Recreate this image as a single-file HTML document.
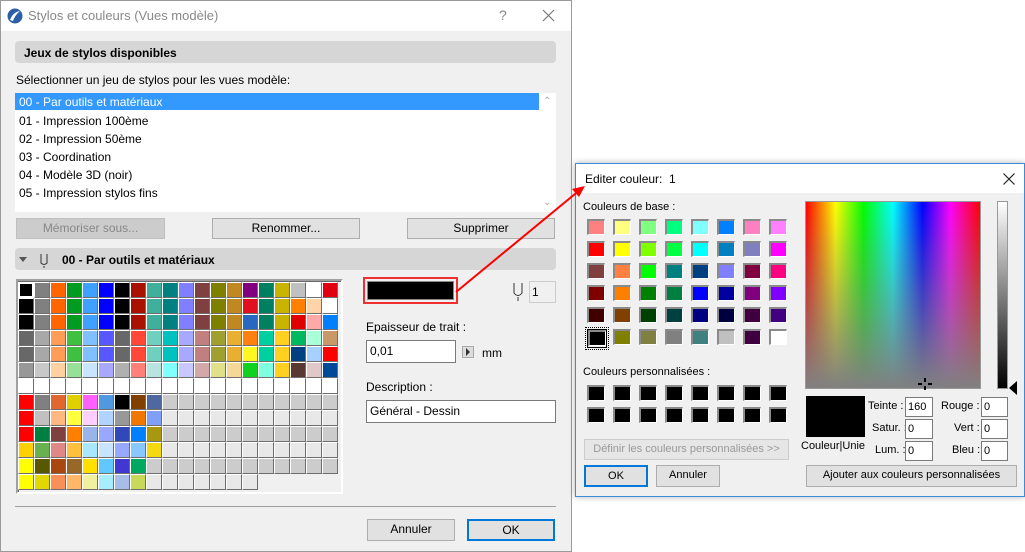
<!DOCTYPE html>
<html><head><meta charset="utf-8"><style>
*{box-sizing:border-box;margin:0;padding:0}
body{width:1025px;height:552px;background:#fff;position:relative;overflow:hidden;font-family:"Liberation Sans",sans-serif;font-size:12px;color:#000}
.a{position:absolute}
.btn{position:absolute;background:#e1e1e1;border:1px solid #adadad;text-align:center;font-size:12px;line-height:19px}
.inp{position:absolute;background:#fff;border:1px solid #7a7a7a;padding-left:3px;font-size:12px}
.hdr{position:absolute;background:#d6d6d6;border-radius:4px;font-weight:bold;font-size:12px}
#grid{position:absolute;left:18px;top:282px;width:320px;display:flex;flex-wrap:wrap}
#grid i{display:block;width:16px;height:16px;border-right:1px solid #6e6e6e;border-bottom:1px solid #6e6e6e;border-left:1px solid #fff;border-top:1px solid #fff}
.sw{position:absolute;width:18px;height:16px;border-top:2px solid #8a8a8a;border-left:2px solid #8a8a8a;border-right:1px solid #fff;border-bottom:1px solid #fff}
.sm{font-size:11px}
</style></head><body>
<div class="a" style="left:0;top:0;width:572px;height:552px;background:#f0f0f0;border:1px solid #9a9a9a"></div>
<div class="a" style="left:1px;top:1px;width:570px;height:30px;background:#fff"></div>
<svg class="a" style="left:7px;top:8px" width="16" height="16"><circle cx="8" cy="8" r="7.5" fill="#2c5fa8"/><path d="M3 12 Q6 4 13 3 Q8 7 6 13Z" fill="#fff"/></svg>
<div class="a" style="left:28px;top:8px;font-size:13px;color:#888">Stylos et couleurs (Vues modèle)</div>
<div class="a" style="left:499px;top:7px;font-size:14px;color:#888">?</div>
<svg class="a" style="left:542px;top:9px" width="13" height="13"><path d="M1 1L12 12M12 1L1 12" stroke="#777" stroke-width="1.2"/></svg>

<div class="hdr" style="left:15px;top:41px;width:541px;height:22px;padding:5px 0 0 9px">Jeux de stylos disponibles</div>
<div class="a" style="left:16px;top:73px">Sélectionner un jeu de stylos pour les vues modèle:</div>
<div class="a" style="left:15px;top:93px;width:541px;height:119px;background:#fff"></div>
<div class="a" style="left:15px;top:93px;width:524px;height:17px;background:#3399ff;color:#fff;padding:2px 0 0 4px">00 - Par outils et matériaux</div>
<div class="a" style="left:19px;top:112px;line-height:18px">01 - Impression 100ème<br>02 - Impression 50ème<br>03 - Coordination<br>04 - Modèle 3D (noir)<br>05 - Impression stylos fins</div>
<div class="a" style="left:543px;top:96px;color:#aaa;font-size:10px">&#8963;</div>
<div class="a" style="left:543px;top:197px;color:#aaa;font-size:10px">&#8964;</div>
<div class="btn" style="left:16px;top:218px;width:149px;height:21px;background:#ccc;border-color:#bfbfbf;color:#888">Mémoriser sous...</div>
<div class="btn" style="left:212px;top:218px;width:148px;height:21px">Renommer...</div>
<div class="btn" style="left:407px;top:218px;width:148px;height:21px">Supprimer</div>
<div class="hdr" style="left:15px;top:248px;width:541px;height:22px;padding:5px 0 0 47px">00 - Par outils et matériaux</div>
<svg class="a" style="left:19px;top:254px" width="40" height="14"><path d="M0 3L8 3L4 8Z" fill="#555"/><path d="M22 0V9Q25 12 28 9V0M25 12V14" stroke="#333" fill="none" stroke-width="1"/></svg>

<div class="a" style="left:16px;top:279px;width:327px;height:215px;background:#f0f0f0;border:2px solid;border-color:#a0a0a0 #fff #fff #a0a0a0;box-shadow:inset 1px 1px #696969"></div>
<div id="grid">
<i style="background:#000;border:2px solid #fff"></i><i style="background:#808080"></i><i style="background:#f60"></i><i style="background:#009c22"></i><i style="background:#40a0ff"></i><i style="background:#00f"></i><i style="background:#000"></i><i style="background:#a81000"></i><i style="background:#40b09c"></i><i style="background:#008080"></i><i style="background:#8080ff"></i><i style="background:#804040"></i><i style="background:#808000"></i><i style="background:#c08820"></i><i style="background:#800080"></i><i style="background:#008060"></i><i style="background:#c8b400"></i><i style="background:#c0c0c0"></i><i style="background:#fff"></i><i style="background:#e00010"></i>
<i style="background:#000"></i><i style="background:#808080"></i><i style="background:#f60"></i><i style="background:#009c22"></i><i style="background:#40a0ff"></i><i style="background:#00f"></i><i style="background:#000"></i><i style="background:#a81000"></i><i style="background:#40b09c"></i><i style="background:#008080"></i><i style="background:#8080ff"></i><i style="background:#804040"></i><i style="background:#808000"></i><i style="background:#c08820"></i><i style="background:#e01020"></i><i style="background:#008060"></i><i style="background:#c8b400"></i><i style="background:#ff8000"></i><i style="background:#ffd4a8"></i><i style="background:#fff"></i>
<i style="background:#000"></i><i style="background:#808080"></i><i style="background:#f60"></i><i style="background:#009c22"></i><i style="background:#40a0ff"></i><i style="background:#00f"></i><i style="background:#000"></i><i style="background:#a81000"></i><i style="background:#40b09c"></i><i style="background:#008080"></i><i style="background:#8080ff"></i><i style="background:#804040"></i><i style="background:#808000"></i><i style="background:#c08820"></i><i style="background:#2868c0"></i><i style="background:#008060"></i><i style="background:#c8b400"></i><i style="background:#e00000"></i><i style="background:#ffa8a8"></i><i style="background:#0080ff"></i>
<i style="background:#686868"></i><i style="background:#a8a8a8"></i><i style="background:#ff9c58"></i><i style="background:#40c040"></i><i style="background:#80c0ff"></i><i style="background:#5858ff"></i><i style="background:#686868"></i><i style="background:#ff4838"></i><i style="background:#70d0c0"></i><i style="background:#00c0c0"></i><i style="background:#a8a8ff"></i><i style="background:#c08080"></i><i style="background:#a0a030"></i><i style="background:#e8b030"></i><i style="background:#ff8010"></i><i style="background:#00d0a0"></i><i style="background:#ffd020"></i><i style="background:#00b860"></i><i style="background:#a8ffd8"></i><i style="background:#c89868"></i>
<i style="background:#686868"></i><i style="background:#a8a8a8"></i><i style="background:#ff9c58"></i><i style="background:#40c040"></i><i style="background:#80c0ff"></i><i style="background:#5858ff"></i><i style="background:#686868"></i><i style="background:#ff4838"></i><i style="background:#70d0c0"></i><i style="background:#00c0c0"></i><i style="background:#a8a8ff"></i><i style="background:#c08080"></i><i style="background:#a0a030"></i><i style="background:#e8b030"></i><i style="background:#fff820"></i><i style="background:#00d0a0"></i><i style="background:#ffd020"></i><i style="background:#004080"></i><i style="background:#a8d0ff"></i><i style="background:#f00"></i>
<i style="background:#989898"></i><i style="background:#c8c8c8"></i><i style="background:#ffd0a0"></i><i style="background:#98e098"></i><i style="background:#c8e4ff"></i><i style="background:#a8a8ff"></i><i style="background:#b0b0b0"></i><i style="background:#ff8078"></i><i style="background:#b8e4e0"></i><i style="background:#80ffff"></i><i style="background:#c8c8ff"></i><i style="background:#d4a8a8"></i><i style="background:#e0e088"></i><i style="background:#f4d898"></i><i style="background:#10d020"></i><i style="background:#80ffe0"></i><i style="background:#ffd020"></i><i style="background:#583830"></i><i style="background:#e0c8c8"></i><i style="background:#004898"></i>
<i style="background:#fff"></i><i style="background:#fff"></i><i style="background:#fff"></i><i style="background:#fff"></i><i style="background:#fff"></i><i style="background:#fff"></i><i style="background:#fff"></i><i style="background:#fff"></i><i style="background:#fff"></i><i style="background:#fff"></i><i style="background:#fff"></i><i style="background:#fff"></i><i style="background:#fff"></i><i style="background:#fff"></i><i style="background:#fff"></i><i style="background:#fff"></i><i style="background:#fff"></i><i style="background:#fff"></i><i style="background:#fff"></i><i style="background:#fff"></i>
<i style="background:#f00"></i><i style="background:#808080"></i><i style="background:#e06830"></i><i style="background:#e0d000"></i><i style="background:#ff60ff"></i><i style="background:#5098e0"></i><i style="background:#000"></i><i style="background:#804000"></i><i style="background:#5068a0"></i><i style="background:#ccc"></i><i style="background:#ccc"></i><i style="background:#ccc"></i><i style="background:#ccc"></i><i style="background:#ccc"></i><i style="background:#ccc"></i><i style="background:#ccc"></i><i style="background:#ccc"></i><i style="background:#ccc"></i><i style="background:#ccc"></i><i style="background:#ccc"></i>
<i style="background:#f00"></i><i style="background:#c0c0c0"></i><i style="background:#ffb880"></i><i style="background:#ffff40"></i><i style="background:#ffd0ff"></i><i style="background:#b0d4ff"></i><i style="background:#989898"></i><i style="background:#f07800"></i><i style="background:#80a0f8"></i><i style="background:#e8e8e8"></i><i style="background:#e8e8e8"></i><i style="background:#e8e8e8"></i><i style="background:#e8e8e8"></i><i style="background:#e8e8e8"></i><i style="background:#e8e8e8"></i><i style="background:#e8e8e8"></i><i style="background:#e8e8e8"></i><i style="background:#e8e8e8"></i><i style="background:#e8e8e8"></i><i style="background:#e8e8e8"></i>
<i style="background:#f00"></i><i style="background:#008040"></i><i style="background:#804040"></i><i style="background:#ff8000"></i><i style="background:#98b4e8"></i><i style="background:#98a8ff"></i><i style="background:#3048b8"></i><i style="background:#0080ff"></i><i style="background:#a89810"></i><i style="background:#ccc"></i><i style="background:#ccc"></i><i style="background:#ccc"></i><i style="background:#ccc"></i><i style="background:#ccc"></i><i style="background:#ccc"></i><i style="background:#ccc"></i><i style="background:#ccc"></i><i style="background:#ccc"></i><i style="background:#ccc"></i><i style="background:#ccc"></i>
<i style="background:#ffd000"></i><i style="background:#68b050"></i><i style="background:#e08888"></i><i style="background:#ffc040"></i><i style="background:#a8e8ff"></i><i style="background:#c8e4ff"></i><i style="background:#98a8ff"></i><i style="background:#88c8ff"></i><i style="background:#f4d810"></i><i style="background:#e8e8e8"></i><i style="background:#e8e8e8"></i><i style="background:#e8e8e8"></i><i style="background:#e8e8e8"></i><i style="background:#e8e8e8"></i><i style="background:#e8e8e8"></i><i style="background:#e8e8e8"></i><i style="background:#e8e8e8"></i><i style="background:#e8e8e8"></i><i style="background:#e8e8e8"></i><i style="background:#e8e8e8"></i>
<i style="background:#ff0"></i><i style="background:#585800"></i><i style="background:#a84810"></i><i style="background:#986828"></i><i style="background:#ffe000"></i><i style="background:#60c8ff"></i><i style="background:#4038d0"></i><i style="background:#00a860"></i><i style="background:#ccc"></i><i style="background:#ccc"></i><i style="background:#ccc"></i><i style="background:#ccc"></i><i style="background:#ccc"></i><i style="background:#ccc"></i><i style="background:#ccc"></i><i style="background:#ccc"></i><i style="background:#ccc"></i><i style="background:#ccc"></i><i style="background:#ccc"></i><i style="background:#ccc"></i>
<i style="background:#ff0"></i><i style="background:#e0d800"></i><i style="background:#f89058"></i><i style="background:#ffb868"></i><i style="background:#f0f0a0"></i><i style="background:#a8ecff"></i><i style="background:#a8bce8"></i><i style="background:#c8d858"></i><i style="background:#e8e8e8"></i><i style="background:#e8e8e8"></i><i style="background:#e8e8e8"></i><i style="background:#e8e8e8"></i><i style="background:#e8e8e8"></i><i style="background:#e8e8e8"></i><i style="background:#e8e8e8"></i>
</div>

<div class="a" style="left:363px;top:277px;width:95px;height:27px;border:2px solid #f03030;padding:2px"><div style="width:100%;height:100%;background:#000;border:1px solid #888"></div></div>
<svg class="a" style="left:512px;top:283px" width="12" height="18"><path d="M2 0V10Q6 15 10 10V0M6 14V18" stroke="#333" fill="none" stroke-width="1"/></svg>
<div class="inp" style="left:529px;top:281px;width:27px;height:22px;background:#f0f0f0;border-color:#ccc;line-height:20px;padding-left:2px">1</div>
<div class="a" style="left:366px;top:320px">Epaisseur de trait :</div>
<div class="inp" style="left:366px;top:340px;width:90px;height:23px;line-height:21px">0,01</div>
<div class="a" style="left:462px;top:346px;width:12px;height:12px;background:#ddd;border:1px solid #aaa"></div>
<svg class="a" style="left:465px;top:348px" width="6" height="8"><path d="M1 0L5 4L1 8Z" fill="#333"/></svg>
<div class="a" style="left:482px;top:346px">mm</div>
<div class="a" style="left:366px;top:380px">Description :</div>
<div class="inp" style="left:366px;top:400px;width:190px;height:23px;line-height:21px">Général - Dessin</div>
<div class="a" style="left:15px;top:506px;width:541px;height:1px;background:#a0a0a0"></div>
<div class="btn" style="left:367px;top:519px;width:88px;height:22px">Annuler</div>
<div class="btn" style="left:467px;top:519px;width:88px;height:22px;border:2px solid #0078d7;line-height:18px">OK</div>

<div class="a" style="left:575px;top:163px;width:450px;height:334px;background:#f0f0f0;border:1px solid #3c8ad8;box-shadow:0 0 6px rgba(0,0,0,.3)"></div>
<div class="a" style="left:576px;top:164px;width:448px;height:29px;background:#fff"></div>
<div class="a" style="left:585px;top:172px;font-size:12px">Editer couleur:&nbsp; 1</div>
<svg class="a" style="left:1003px;top:173px" width="12" height="12"><path d="M0.5 0.5L11.5 11.5M11.5 0.5L0.5 11.5" stroke="#222" stroke-width="1.2"/></svg>
<div class="a sm" style="left:583px;top:201px">Couleurs de base :</div>
<div class="sw" style="left:587px;top:219px;background:#ff8080"></div><div class="sw" style="left:613px;top:219px;background:#ffff80"></div><div class="sw" style="left:639px;top:219px;background:#80ff80"></div><div class="sw" style="left:665px;top:219px;background:#00ff80"></div><div class="sw" style="left:691px;top:219px;background:#80ffff"></div><div class="sw" style="left:717px;top:219px;background:#0080ff"></div><div class="sw" style="left:743px;top:219px;background:#ff80c0"></div><div class="sw" style="left:769px;top:219px;background:#ff80ff"></div>
<div class="sw" style="left:587px;top:241px;background:#f00"></div><div class="sw" style="left:613px;top:241px;background:#ff0"></div><div class="sw" style="left:639px;top:241px;background:#80ff00"></div><div class="sw" style="left:665px;top:241px;background:#00ff40"></div><div class="sw" style="left:691px;top:241px;background:#0ff"></div><div class="sw" style="left:717px;top:241px;background:#0080c0"></div><div class="sw" style="left:743px;top:241px;background:#8080c0"></div><div class="sw" style="left:769px;top:241px;background:#f0f"></div>
<div class="sw" style="left:587px;top:263px;background:#804040"></div><div class="sw" style="left:613px;top:263px;background:#ff8040"></div><div class="sw" style="left:639px;top:263px;background:#0f0"></div><div class="sw" style="left:665px;top:263px;background:#008080"></div><div class="sw" style="left:691px;top:263px;background:#004080"></div><div class="sw" style="left:717px;top:263px;background:#8080ff"></div><div class="sw" style="left:743px;top:263px;background:#800040"></div><div class="sw" style="left:769px;top:263px;background:#ff0080"></div>
<div class="sw" style="left:587px;top:285px;background:#800000"></div><div class="sw" style="left:613px;top:285px;background:#ff8000"></div><div class="sw" style="left:639px;top:285px;background:#008000"></div><div class="sw" style="left:665px;top:285px;background:#008040"></div><div class="sw" style="left:691px;top:285px;background:#00f"></div><div class="sw" style="left:717px;top:285px;background:#0000a0"></div><div class="sw" style="left:743px;top:285px;background:#800080"></div><div class="sw" style="left:769px;top:285px;background:#8000ff"></div>
<div class="sw" style="left:587px;top:307px;background:#400000"></div><div class="sw" style="left:613px;top:307px;background:#804000"></div><div class="sw" style="left:639px;top:307px;background:#004000"></div><div class="sw" style="left:665px;top:307px;background:#004040"></div><div class="sw" style="left:691px;top:307px;background:#000080"></div><div class="sw" style="left:717px;top:307px;background:#000040"></div><div class="sw" style="left:743px;top:307px;background:#400040"></div><div class="sw" style="left:769px;top:307px;background:#400080"></div>
<div class="a" style="left:585px;top:327px;width:24px;height:23px;border:1px dotted #000;padding:1px"><div style="width:100%;height:100%;border:1px solid #000"></div></div>
<div class="sw" style="left:588px;top:330px;background:#000"></div><div class="sw" style="left:613px;top:329px;background:#808000"></div><div class="sw" style="left:639px;top:329px;background:#808040"></div><div class="sw" style="left:665px;top:329px;background:#808080"></div><div class="sw" style="left:691px;top:329px;background:#408080"></div><div class="sw" style="left:717px;top:329px;background:#c0c0c0"></div><div class="sw" style="left:743px;top:329px;background:#400040"></div><div class="sw" style="left:769px;top:329px;background:#fff"></div>
<div class="a sm" style="left:583px;top:366px">Couleurs personnalisées :</div>
<div class="sw" style="left:587px;top:385px;background:#000"></div><div class="sw" style="left:613px;top:385px;background:#000"></div><div class="sw" style="left:639px;top:385px;background:#000"></div><div class="sw" style="left:665px;top:385px;background:#000"></div><div class="sw" style="left:691px;top:385px;background:#000"></div><div class="sw" style="left:717px;top:385px;background:#000"></div><div class="sw" style="left:743px;top:385px;background:#000"></div><div class="sw" style="left:769px;top:385px;background:#000"></div>
<div class="sw" style="left:587px;top:407px;background:#000"></div><div class="sw" style="left:613px;top:407px;background:#000"></div><div class="sw" style="left:639px;top:407px;background:#000"></div><div class="sw" style="left:665px;top:407px;background:#000"></div><div class="sw" style="left:691px;top:407px;background:#000"></div><div class="sw" style="left:717px;top:407px;background:#000"></div><div class="sw" style="left:743px;top:407px;background:#000"></div><div class="sw" style="left:769px;top:407px;background:#000"></div>
<div class="btn sm" style="left:584px;top:439px;width:205px;height:21px;color:#999;background:#e6e6e6;border-color:#ccc">Définir les couleurs personnalisées &gt;&gt;</div>
<div class="btn sm" style="left:584px;top:465px;width:64px;height:22px;border:2px solid #0078d7;line-height:18px">OK</div>
<div class="btn sm" style="left:656px;top:465px;width:64px;height:22px">Annuler</div>

<div class="a" style="left:805px;top:201px;width:176px;height:188px;border:1px solid #999;background:linear-gradient(to bottom,rgba(128,128,128,0),#808080),linear-gradient(to right,#f00,#ff0 17%,#0f0 33%,#0ff 50%,#00f 67%,#f0f 83%,#f00)"></div>
<svg class="a" style="left:918px;top:378px" width="14" height="12"><path d="M7 0V4M7 8V12M0 6H4M10 6H14" stroke="#000" stroke-width="2"/></svg>
<div class="a" style="left:997px;top:201px;width:11px;height:188px;border:1px solid #999;background:linear-gradient(#fff,#000)"></div>
<svg class="a" style="left:1009px;top:381px" width="8" height="14"><path d="M8 0V14L0 7Z" fill="#000"/></svg>
<div class="a" style="left:806px;top:396px;width:59px;height:41px;background:#000"></div>
<div class="a sm" style="left:801px;top:440px">Couleur|Unie</div>
<div class="a sm" style="left:868px;top:400px">Teinte :</div>
<div class="a sm" style="left:872px;top:422px">Satur. :</div>
<div class="a sm" style="left:875px;top:444px">Lum. :</div>
<div class="inp sm" style="left:905px;top:397px;width:28px;height:20px;line-height:18px;padding-left:2px">160</div>
<div class="inp sm" style="left:905px;top:419px;width:28px;height:20px;line-height:18px;padding-left:2px">0</div>
<div class="inp sm" style="left:905px;top:441px;width:28px;height:20px;line-height:18px;padding-left:2px">0</div>
<div class="a sm" style="left:941px;top:400px">Rouge :</div>
<div class="a sm" style="left:954px;top:422px">Vert :</div>
<div class="a sm" style="left:952px;top:444px">Bleu :</div>
<div class="inp sm" style="left:981px;top:397px;width:27px;height:20px;line-height:18px;padding-left:2px">0</div>
<div class="inp sm" style="left:981px;top:419px;width:27px;height:20px;line-height:18px;padding-left:2px">0</div>
<div class="inp sm" style="left:981px;top:441px;width:27px;height:20px;line-height:18px;padding-left:2px">0</div>
<div class="btn sm" style="left:806px;top:465px;width:211px;height:22px">Ajouter aux couleurs personnalisées</div>

<svg class="a" style="left:0;top:0" width="1025" height="552"><path d="M456 292L581 189" stroke="#f00" stroke-width="2"/><path d="M585 186L572 189L579 197Z" fill="#f00"/></svg>
</body></html>
